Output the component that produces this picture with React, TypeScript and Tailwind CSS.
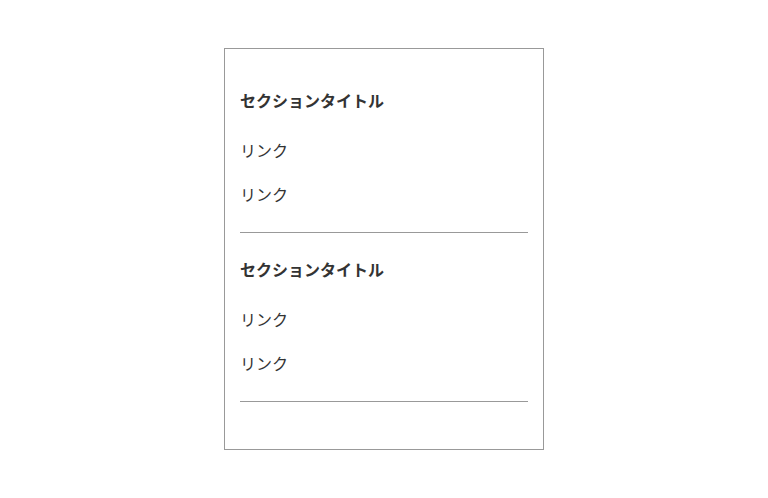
export default function App() {
  const sections = [
    { title: "セクションタイトル", links: ["リンク", "リンク"] },
    { title: "セクションタイトル", links: ["リンク", "リンク"] },
  ];

  return (
    <div
      className="min-h-screen bg-white flex justify-center pt-12"
      style={{ fontFamily: '"Noto Sans CJK JP", "Noto Sans", sans-serif' }}
    >
      <div className="w-[320px] h-[402px] border border-[#999999] px-[15px] pt-[15px]">
        {sections.map((section, index) => (
          <div key={index} className="pt-6 pb-4 border-b border-[#999999]">
            <h2 className="text-base leading-6 font-bold text-[#333333] mb-4">
              {section.title}
            </h2>
            <ul>
              {section.links.map((link, i) => (
                <li key={i}>
                  <a href="#" className="block py-2.5 text-base leading-6 text-[#333333]">
                    {link}
                  </a>
                </li>
              ))}
            </ul>
          </div>
        ))}
      </div>
    </div>
  );
}
